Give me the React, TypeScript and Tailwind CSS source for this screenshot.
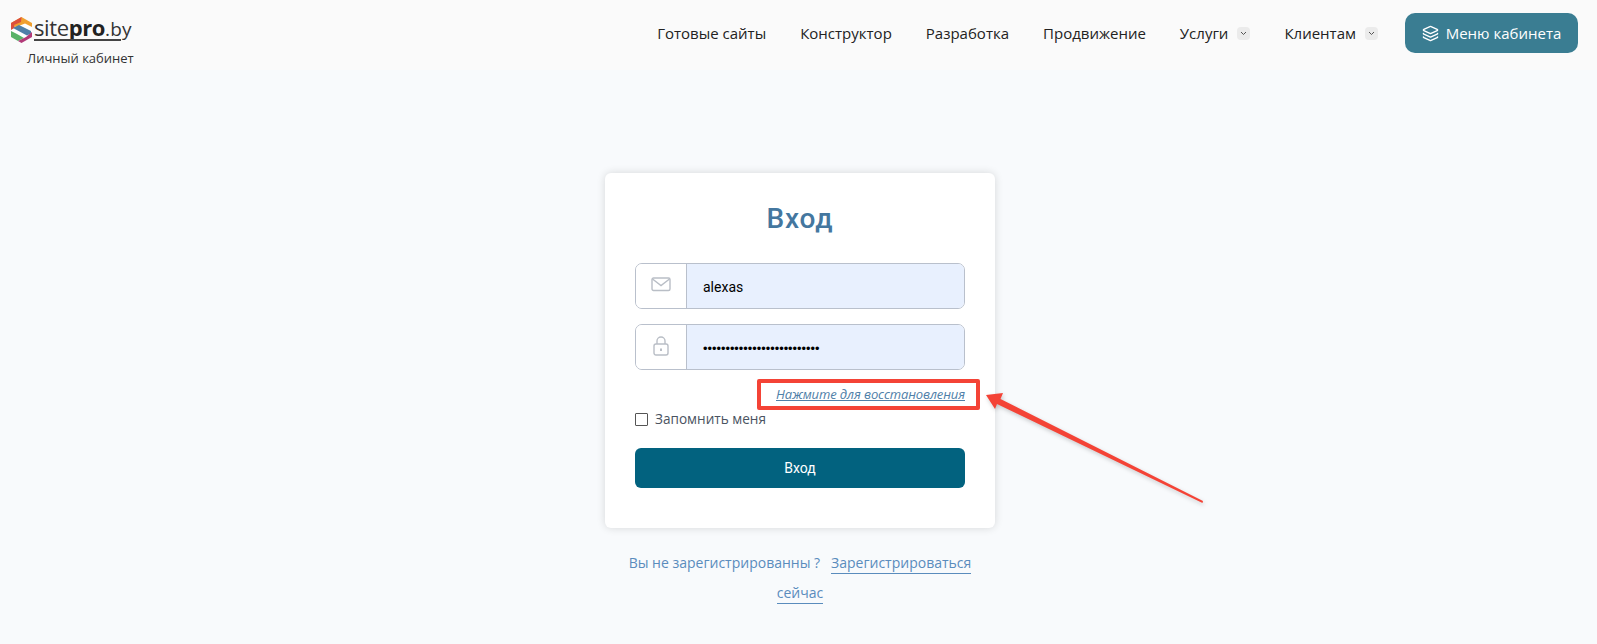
import { Layers } from "lucide-react";

function Logo() {
  return (
    <div className="flex flex-col shrink-0">
      <div className="flex items-start">
        <svg width="23" height="26" viewBox="0 0 23 26" className="shrink-0 mt-[17px] ml-[10px]">
          <path d="M11.5 0 22 6 22 20 11.5 26 1 20 1 6Z" fill="#fff" />
          <path d="M11.5 0 22 6 22 10 15 6.5 6 10 1 8 1 6Z" fill="#f0a030" />
          <path d="M11.5 0 1 6 1 13 5 10.5 4 8 11 5Z" fill="#dc4f3c" />
          <path d="M3 11 9 8 21 14 21 16.5 17 18.5 Z" fill="#4f7fa8" />
          <path d="M1 14 7 17 14 21 8 24 1 20Z" fill="#58b368" />
          <path d="M22 15 22 20 11.5 26 8 24 16 20 Z" fill="#b23a78" />
        </svg>
        <div className="relative mt-[9px] ml-px font-['Open_Sans',sans-serif] text-[22px] leading-[36px] text-[#333] tracking-[-0.4px] whitespace-nowrap">
          <span>site</span>
          <span className="font-bold text-[#222]">pro</span>
          <span className="text-[19px] tracking-[0.2px]">.by</span>
          <div className="absolute left-0 top-[30px] w-[87px] h-[2px] bg-[#444]" />
        </div>
      </div>
      <div className="ml-[27px] mt-[2px] text-[13px] leading-[18px] text-[#333]">Личный кабинет</div>
    </div>
  );
}

function Chevron() {
  return (
    <span className="ml-[9px] flex h-[13px] w-[13px] items-center justify-center rounded-[4px] bg-[#ebebeb]">
      <svg width="7" height="5" viewBox="0 0 7 5" fill="none" stroke="#555" strokeWidth="1">
        <path d="M1 1 3.5 3.5 6 1" />
      </svg>
    </span>
  );
}

function Field({ icon, children }: { icon: React.ReactNode; children: React.ReactNode }) {
  return (
    <div className="flex h-[46px] rounded-[7px] border border-[#b9c0cc] overflow-hidden">
      <div className="flex w-[50px] shrink-0 items-center justify-center pb-[3px] bg-white">{icon}</div>
      <div className="flex flex-1 items-center border-l border-[#b9c0cc] bg-[#e8f0fe] pl-[16px] pt-[3px]">{children}</div>
    </div>
  );
}

export default function App() {
  return (
    <div className="relative h-[644px] overflow-hidden bg-[#f8fafc] font-['Open_Sans',sans-serif]">
      <header className="flex h-[70px] items-start justify-between bg-[#fafafa] pr-[19px]">
        <Logo />
        <nav className="flex h-[66px] items-center text-[15px] text-[#222]">
          <a className="mr-[34px]">Готовые сайты</a>
          <a className="mr-[34px]">Конструктор</a>
          <a className="mr-[34px]">Разработка</a>
          <a className="mr-[34px]">Продвижение</a>
          <a className="flex items-center mr-[34px]">
            Услуги
            <Chevron />
          </a>
          <a className="flex items-center mr-[27px]">
            Клиентам
            <Chevron />
          </a>
          <button className="flex h-[40px] w-[173px] items-center justify-center gap-[7px] rounded-[10px] bg-[#3a7d92] text-[15px] text-white">
            <Layers size={17} strokeWidth={2} />
            Меню кабинета
          </button>
        </nav>
      </header>

      <main className="flex flex-col items-center pt-[103px] pl-[3px]">
        <div className="h-[355px] w-[390px] rounded-[6px] bg-white px-[30px] shadow-[0_0_8px_rgba(0,0,0,0.14)]">
          <h1 className="mt-[26px] text-center font-['Roboto',sans-serif] text-[28px] font-medium leading-[40px] tracking-[0.8px] text-[#44779f]">
            Вход
          </h1>
          <div className="mt-[24px] flex flex-col gap-[15px]">
            <Field
              icon={
                <svg width="20" height="15" viewBox="0 0 20 15" fill="none" stroke="#b9bec6" strokeWidth="1.4">
                  <rect x="1" y="1" width="18" height="12.5" rx="1.5" />
                  <path d="M1.5 2 10 8.5 18.5 2" />
                </svg>
              }
            >
              <input
                readOnly
                value="alexas"
                className="w-full bg-transparent font-['Roboto',sans-serif] text-[14px] text-black outline-none"
              />
            </Field>
            <Field
              icon={
                <svg width="16" height="20" viewBox="0 0 16 20" fill="none" stroke="#b9bec6" strokeWidth="1.4">
                  <rect x="1" y="8" width="14" height="11" rx="2" />
                  <path d="M4 8V5a4 4 0 0 1 8 0v3" />
                  <path d="M8 12.5v2.5" strokeWidth="2" />
                </svg>
              }
            >
              <input
                readOnly
                type="password"
                value="aaaaaaaaaaaaaaaaaaaaaaaaaa"
                className="w-full bg-transparent font-['Liberation_Sans',sans-serif] text-[12.8px] text-black outline-none"
              />
            </Field>
          </div>
          <div className="mt-[15px] flex justify-end">
            <a className="relative text-[13px] italic leading-[18px] tracking-[-0.1px] text-[#4f80a8] underline">
              Нажмите для восстановления
              <span className="absolute -left-[19px] -right-[15px] -top-[6px] -bottom-[7px] rounded-[2px] border-[4px] border-[#f44336]" />
            </a>
          </div>
          <label className="mt-[7px] flex items-center gap-[7px] text-[13.6px] font-medium leading-[18px] text-[#4a5361]">
            <span className="h-[13px] w-[13px] rounded-[1px] border border-[#555] bg-white" />
            Запомнить меня
          </label>
          <button className="mt-[20px] h-[40px] w-full rounded-[6px] bg-[#02627f] font-['Roboto',sans-serif] text-[14px] text-white">
            Вход
          </button>
        </div>
        <div className="mt-[20px] w-[390px] text-center text-[14px] leading-[30px] text-[#5a8cbd]">
          <span>Вы не зарегистрированны ?</span>
          <a className="ml-[11px] border-b border-[#5a8cbd] pb-[1px]">Зарегистрироваться</a>
          <br />
          <a className="border-b border-[#5a8cbd] pb-[1px]">сейчас</a>
        </div>
      </main>

      <svg
        width="240"
        height="130"
        viewBox="0 0 240 130"
        className="absolute left-[980px] top-[385px] drop-shadow-[1px_2px_2px_rgba(0,0,0,0.2)]"
      >
        <path d="M6 10 23 8 20.5 14 223 116 222.5 118 17 19 15 24Z" fill="#f44336" />
      </svg>
    </div>
  );
}
